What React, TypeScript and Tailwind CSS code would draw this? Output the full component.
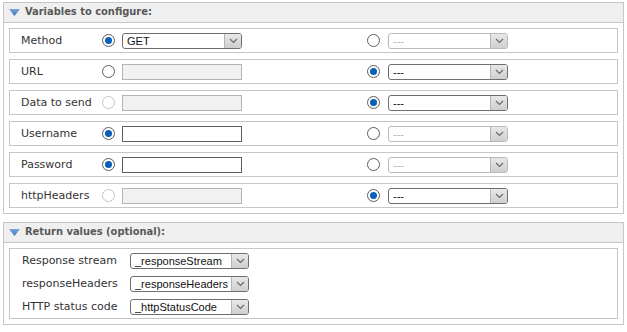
import React from 'react';

type Side = { radio: 'on' | 'off' | 'disabled'; value?: string; enabled?: boolean };

type Row = {
  label: string;
  left: Side;
  leftKind: 'select' | 'input';
  right: Side;
};

const rows: Row[] = [
  { label: 'Method', leftKind: 'select', left: { radio: 'on', value: 'GET', enabled: true }, right: { radio: 'off', value: '---', enabled: false } },
  { label: 'URL', leftKind: 'input', left: { radio: 'off', enabled: false }, right: { radio: 'on', value: '---', enabled: true } },
  { label: 'Data to send', leftKind: 'input', left: { radio: 'disabled', enabled: false }, right: { radio: 'on', value: '---', enabled: true } },
  { label: 'Username', leftKind: 'input', left: { radio: 'on', enabled: true }, right: { radio: 'off', value: '---', enabled: false } },
  { label: 'Password', leftKind: 'input', left: { radio: 'on', enabled: true }, right: { radio: 'off', value: '---', enabled: false } },
  { label: 'httpHeaders', leftKind: 'input', left: { radio: 'disabled', enabled: false }, right: { radio: 'on', value: '---', enabled: true } },
];

const returns = [
  { label: 'Response stream', value: '_responseStream' },
  { label: 'responseHeaders', value: '_responseHeaders' },
  { label: 'HTTP status code', value: '_httpStatusCode' },
];

const Radio = ({ state }: { state: 'on' | 'off' | 'disabled' }) => {
  if (state === 'on') {
    return (
      <span className="flex h-[13px] w-[13px] shrink-0 items-center justify-center rounded-full border border-[#5c5c5c] bg-white">
        <span className="h-[7px] w-[7px] rounded-full bg-[#0a5fb8]" />
      </span>
    );
  }
  return (
    <span
      className={
        state === 'off'
          ? 'block h-[13px] w-[13px] shrink-0 rounded-full border border-[#5c5c5c] bg-white'
          : 'block h-[13px] w-[13px] shrink-0 rounded-full border border-[#c4c4c4] bg-white'
      }
    />
  );
};

const Chevron = () => (
  <svg width="9" height="6" viewBox="0 0 9 6">
    <path d="M1 1 L4.5 4.5 L8 1" fill="none" stroke="#6a6a6a" strokeWidth="1.2" />
  </svg>
);

const Select = ({ value, enabled, width }: { value: string; enabled: boolean; width: string }) => (
  <div
    className={`flex h-[16px] ${width} shrink-0 items-stretch overflow-hidden rounded-[3px] border bg-white ${
      enabled ? 'border-[#6e6e6e]' : 'border-[#b9b9b9]'
    }`}
  >
    <span
      className={`flex-1 truncate pl-[4px] font-['Liberation_Sans',sans-serif] text-[11px] leading-[14px] ${
        enabled ? 'text-[#111]' : 'text-[#b5b5b5]'
      }`}
    >
      {value}
    </span>
    <span className="flex w-[17px] items-center justify-center border-l border-[#b4b4b4] bg-gradient-to-b from-[#e8e8e8] to-[#cfcfcf]">
      <Chevron />
    </span>
  </div>
);

const TextInput = ({ enabled }: { enabled: boolean }) => (
  <div
    className={
      enabled
        ? 'h-[16px] w-[120px] shrink-0 border border-[#5e5e5e] bg-white'
        : 'h-[16px] w-[120px] shrink-0 border border-[#b4b4b4] bg-[#f1f1f1]'
    }
  />
);

const Triangle = () => (
  <svg width="11" height="7" viewBox="0 0 11 7" className="shrink-0">
    <defs>
      <linearGradient id="tri" x1="0" y1="0" x2="0" y2="1">
        <stop offset="0" stopColor="#7aa6db" />
        <stop offset="1" stopColor="#3f74bd" />
      </linearGradient>
    </defs>
    <path d="M0 0 H11 L5.5 7 Z" fill="url(#tri)" />
  </svg>
);

const Header = ({ title }: { title: string }) => (
  <div className="flex h-[20px] items-center gap-[5px] border-b border-[#c6c6c6] bg-[#efefef] pl-[5px]">
    <Triangle />
    <span className="font-['DejaVu_Sans_Condensed','DejaVu_Sans',sans-serif] text-[11px] font-bold text-[#595959]">{title}</span>
  </div>
);

export default function App() {
  return (
    <div className="h-[332px] w-[627px] bg-white pl-[3px] pt-[2px] font-['DejaVu_Sans',sans-serif] text-[11px] text-[#333]">
      <div className="w-[621px] border border-[#c6c6c6]">
        <Header title="Variables to configure:" />
        <div className="flex flex-col gap-[6px] px-[5px] py-[5px]">
          {rows.map((r) => (
            <div key={r.label} className="flex h-[25px] items-center border border-[#c6c6c6] pl-[11px]">
              <span className="w-[81px] shrink-0 leading-[14px]">{r.label}</span>
              <Radio state={r.left.radio} />
              <div className="ml-[7px] flex">
                {r.leftKind === 'select' ? (
                  <Select value={r.left.value ?? ''} enabled={!!r.left.enabled} width="w-[120px]" />
                ) : (
                  <TextInput enabled={!!r.left.enabled} />
                )}
              </div>
              <div className="ml-[125px] flex">
                <Radio state={r.right.radio} />
              </div>
              <div className="ml-[8px] flex">
                <Select value={r.right.value ?? ''} enabled={!!r.right.enabled} width="w-[120px]" />
              </div>
            </div>
          ))}
        </div>
      </div>
      <div className="mt-[8px] w-[621px] border border-[#c6c6c6]">
        <Header title="Return values (optional):" />
        <div className="px-[5px] py-[5px]">
          <div className="flex flex-col border border-[#c6c6c6] pl-[12px]">
            {returns.map((r) => (
              <div key={r.label} className="flex h-[23px] items-center">
                <span className="w-[108px] shrink-0 leading-[14px]">{r.label}</span>
                <Select value={r.value} enabled width="w-[119px]" />
              </div>
            ))}
          </div>
        </div>
      </div>
    </div>
  );
}
